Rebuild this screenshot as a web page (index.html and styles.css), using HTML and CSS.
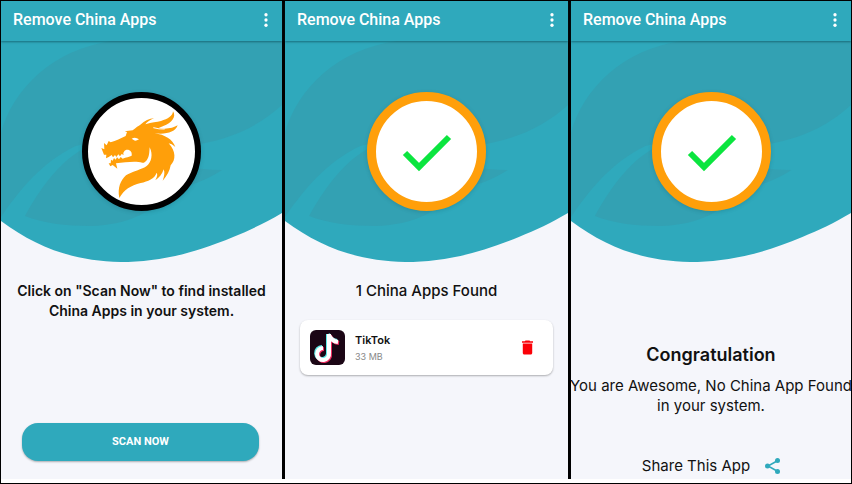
FILE: index.html
```html
<!DOCTYPE html>
<html lang="en">
<head>
    <meta charset="utf-8">
    <meta name="viewport" content="width=device-width, initial-scale=1">
    <title>Remove China Apps</title>

    <link rel="stylesheet" href="styles.css">
</head>
<body>
<!-- shared shapes -->
<svg class="defs" aria-hidden="true">
    <symbol id="wave" viewBox="0 0 282 221" preserveAspectRatio="none">
        <path fill="#2fa9bc" d="M0 0H282V172C265 182 250 189 233 196C190 214 155 221 120 221C72 220 35 206 0 180Z"/>
        <path fill="#33a1b3" d="M0 92C12 48 52 8 112 0H282V64C262 82 238 96 200 103C150 106 110 95 75 105C40 122 20 148 2 173L0 176Z"/>
        <path fill="#33a1b3" d="M24 175C38 150 56 123 82 108C125 112 170 128 222 129C204 141 190 143 180 148C150 170 130 184 90 185C64 185 42 182 24 175Z"/>
    </symbol>
    <symbol id="dots" viewBox="0 0 24 24">
        <circle cx="12" cy="5" r="2.2"/>
        <circle cx="12" cy="12" r="2.2"/>
        <circle cx="12" cy="19" r="2.2"/>
    </symbol>
    <symbol id="check" viewBox="0 0 119 119">
        <path fill="none" stroke="#0be53f" stroke-width="6" d="M38 61L52 75L82 45"/>
    </symbol>
</svg>

<div class="screens">
    <section class="screen">
        <div class="header">
            <h1>Remove China Apps</h1>
            <button class="menu" aria-label="More options"><svg><use href="#dots"/></svg></button>
        </div>
        <div class="hero">
            <svg class="wave"><use href="#wave"/></svg>
            <div class="badge badge-dark">
                <svg viewBox="18 18 357 357">
                    <!-- head and mane -->
                    <path fill="#ff9f0a" d="M76 186L85 190L84 171L92 178L98 165L104 169C120 164 134 157 149 150L153 138L146 136L170 133C180 124 188 119 193 116C206 104 220 97 234 97C222 102 213 108 208 115C228 109 242 108 255 105C276 99 290 90 291 76C302 92 287 112 262 120L248 126C270 131 292 126 305 118C298 139 270 146 236 142C266 146 290 160 298 183C290 176 284 173 278 172C300 196 300 222 284 238C281 254 274 268 260 284C265 270 267 259 263 250C259 264 250 274 238 283C244 272 245 264 242 260C236 278 216 286 194 291C164 298 144 312 130 336C124 304 134 284 150 268C168 256 200 250 212 240C226 230 232 205 221 184C220 198 220 214 211 224C207 228 203 231 199 230C180 224 150 228 120 232L124 248L110 237L103 241L98 232L104 232L105 221L110 224L114 216L119 221L123 214L129 220L134 213L140 218C150 213 160 213 167 209C169 198 163 190 151 191C143 195 140 201 143 207L137 204L132 211L127 205L121 213L117 207L111 214L107 207L98 213L90 217L91 206L84 206Z"/>
                    <!-- eye -->
                    <path fill="#fff" d="M167 158Q178 152 189 160Q178 167 173 162Z"/>
                    <path fill="none" stroke="#fff" stroke-width="3" d="M232 125Q249 130 266 129"/>
                </svg>
            </div>
        </div>
        <div class="body intro">
            <p class="message">Click on "Scan Now" to find installed China Apps in your system.</p>
            <button class="scan">SCAN NOW</button>
        </div>
    </section>

    <section class="screen">
        <div class="header">
            <h1>Remove China Apps</h1>
            <button class="menu" aria-label="More options"><svg><use href="#dots"/></svg></button>
        </div>
        <div class="hero">
            <svg class="wave"><use href="#wave"/></svg>
            <div class="badge"><svg><use href="#check"/></svg></div>
        </div>
        <div class="body">
            <p class="message">1 China Apps Found</p>
            <div class="app">
                <svg class="app-icon" viewBox="0 0 35 35">
                    <rect width="35" height="35" rx="6" fill="#1b0615"/>
                    <g fill="none" stroke-width="4">
                        <path stroke="#5ee9e6" d="M18 4V22A6 6 0 1 1 12 17M18 4Q20 10 27 11"/>
                        <path stroke="#f02b60" d="M20 5V24A6 6 0 1 1 14 19M20 6Q22 12 29 13"/>
                        <path stroke="#fff" d="M19 4V23A6 6 0 1 1 13 18M19 5Q21 11 28 12"/>
                    </g>
                </svg>
                <div class="app-info">
                    <h2>TikTok</h2>
                    <span>33 MB</span>
                </div>
                <button class="delete" aria-label="Delete TikTok">
                    <svg viewBox="5 3 14 18"><path fill="#fb0007" d="M6 19c0 1.100.900 2 2 2h8c1.100 0 2-.900 2-2V7H6v12zM19 4h-3.500l-1-1h-5l-1 1H5v2h14V4z"/></svg>
                </button>
            </div>
        </div>
    </section>

    <section class="screen">
        <div class="header">
            <h1>Remove China Apps</h1>
            <button class="menu" aria-label="More options"><svg><use href="#dots"/></svg></button>
        </div>
        <div class="hero">
            <svg class="wave"><use href="#wave"/></svg>
            <div class="badge"><svg><use href="#check"/></svg></div>
        </div>
        <div class="body result">
            <h2>Congratulation</h2>
            <p>You are Awesome, No China App Found<br>in your system.</p>
            <a class="share" href="#share">
                Share This App
                <svg viewBox="0 0 15 16">
                    <path fill="none" stroke="#2fa9bc" stroke-width="1.5" d="M12 3L3 8L12 13"/>
                    <g fill="#2fa9bc">
                        <circle cx="12.500" cy="2.500" r="2.500"/>
                        <circle cx="2.500" cy="8" r="2.500"/>
                        <circle cx="12.500" cy="13.500" r="2.500"/>
                    </g>
                </svg>
            </a>
        </div>
    </section>
</div>
</body>
</html>
```

FILE: styles.css
```css
* {
    box-sizing: border-box;
}

body {
    margin: 0;
    min-height: 100vh;
    display: flex;
    border: solid 1px black;
    background-color: white;
    color: #111;
    font-family: Inter, "Liberation Sans", sans-serif;
}

h1, h2, p {
    margin: 0;
}

button {
    border: none;
    padding: 0;
    background: none;
    cursor: pointer;
}

svg {
    display: block;
}

.defs {
    position: absolute;
    width: 0;
    height: 0;
}

.screens {
    flex: 1;
    display: grid;
    grid-template-columns: minmax(0, 281fr) minmax(0, 283fr) minmax(0, 280fr);
    gap: 3px;
    margin-bottom: 4px;
    background-color: black;
}

.screen {
    display: flex;
    flex-direction: column;
    background-color: #f5f6fb;
}

.header {
    position: relative;
    display: flex;
    align-items: center;
    justify-content: space-between;
    height: 40px;
    padding: 0 6px 2px 12px;
    background-color: #2fa9bc;
    box-shadow: 0 1px 2px rgba(0, 50, 60, 0.5);
    color: white;
}

.header h1 {
    font: 500 16px/20px Roboto, sans-serif;
}

.menu svg {
    width: 20px;
    height: 18px;
    fill: white;
}

.hero {
    display: grid;
    place-items: center;
}

.hero > * {
    grid-area: 1 / 1;
}

.wave {
    width: 100%;
    height: 221px;
}

.badge {
    width: 119px;
    height: 119px;
    border-radius: 50%;
    border: solid 9px #ff9f0a;
    background-color: white;
    box-shadow: 0 1px 4px rgba(0, 60, 70, 0.2);
}

.badge-dark {
    border: solid 6px black;
}

.badge svg {
    width: 119px;
    height: 119px;
    margin: -9px;
}

.badge-dark svg {
    margin: -6px;
}

.body {
    flex: 1;
    display: flex;
    flex-direction: column;
    padding: 19px 15px 18px;
}

.message {
    font-size: 15px;
    font-weight: 500;
    line-height: 20px;
    text-align: center;
}

.intro {
    justify-content: space-between;
}

.intro .message {
    font-size: 14px;
    font-weight: 600;
}

.scan {
    height: 38px;
    margin: 0 8px 0 6px;
    border-radius: 16px;
    background-color: #2fa9bc;
    box-shadow: 0 1px 2px rgba(0, 0, 0, 0.3);
    color: white;
    font: 700 11px/16px Roboto, sans-serif;
}

.app {
    display: flex;
    align-items: center;
    gap: 10px;
    margin-top: 19px;
    padding: 10px 20px 10px 10px;
    border-radius: 8px;
    background-color: white;
    box-shadow: 0 1px 2px rgba(0, 0, 0, 0.3);
}

.app-icon {
    width: 35px;
    height: 35px;
}

.app-info {
    flex: 1;
}

.app-info h2 {
    font-size: 11px;
    font-weight: 600;
    line-height: 18px;
}

.app-info span {
    display: block;
    color: #888;
    font-size: 9px;
    line-height: 16px;
}

.delete svg {
    width: 11px;
    height: 15px;
}

.result {
    align-items: center;
    padding: 80px 0 0;
    text-align: center;
}

.result h2 {
    font-size: 18px;
    font-weight: 600;
    line-height: 26px;
}

.result p {
    margin-top: 8px;
    font-size: 15px;
    line-height: 20px;
    white-space: nowrap;
}

.share {
    display: flex;
    align-items: center;
    gap: 15px;
    margin-top: 40px;
    color: #111;
    font-size: 15px;
    line-height: 20px;
    text-decoration: none;
}

.share svg {
    width: 15px;
    height: 16px;
}
```
